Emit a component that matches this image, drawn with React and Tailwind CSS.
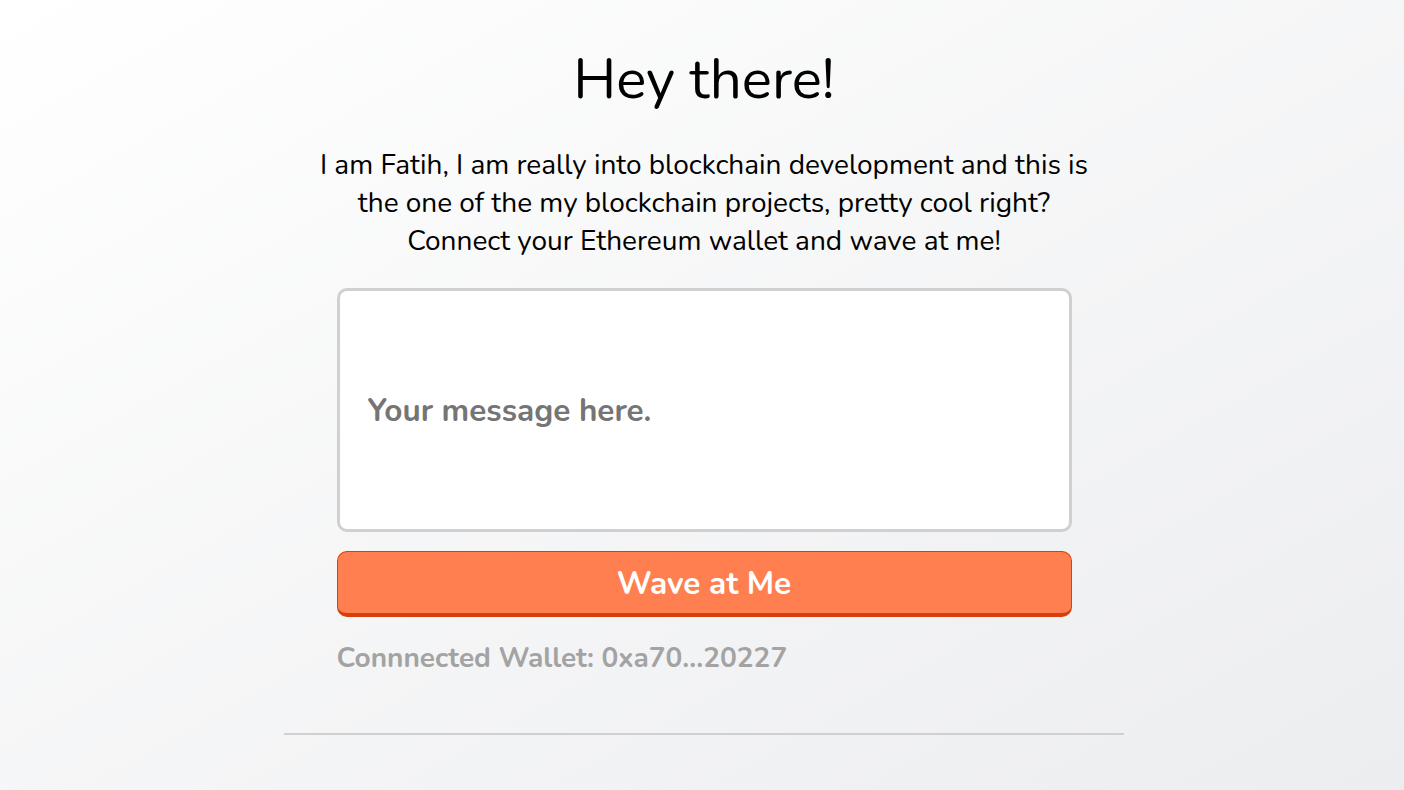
import React, { useState } from "react";

export default function App() {
  const [message, setMessage] = useState("");

  return (
    <div
      className="min-h-screen w-full bg-[linear-gradient(to_bottom_right,#ffffff,#ecedef)] pl-[4px] text-black"
      style={{ fontFamily: '"Nunito", "Lato", sans-serif' }}
    >
      <div className="mx-auto flex w-[840px] flex-col items-center pt-[44px]">
        {/* Header */}
        <h1 className="text-[56.5px] font-normal leading-[72px]">
          Hey there!
        </h1>

        <p className="mt-[30px] text-center text-[28px] leading-[38px]">
          I am Fatih, I am really into blockchain development and this is
          <br />
          the one of the my blockchain projects, pretty cool right?
          <br />
          Connect your Ethereum wallet and wave at me!
        </p>

        {/* Message box */}
        <div className="mt-[28px] flex w-[735px] flex-col">
          <input
            value={message}
            onChange={(e) => setMessage(e.target.value)}
            placeholder="Your message here."
            className="h-[244px] w-full rounded-[10px] border-[3px] border-[#d0d0d0] bg-white px-[28px] text-[31.5px] font-bold text-[#333] outline-none placeholder:text-[#757575]"
          />

          <button
            type="button"
            className="mt-[19px] h-[66px] w-full rounded-[10px] border border-b-[4px] border-[#d6400c] bg-[#ff7f50] pt-[3px] text-[31.5px] font-bold text-white"
          >
            Wave at Me
          </button>

          <div className="mt-[24px] text-[28px] font-bold leading-[34px] text-[#a3a3a3]">
            Connnected Wallet: 0xa70...20227
          </div>
        </div>

        <hr className="mt-[58px] h-[2px] w-full border-0 bg-[#cfd0d2]" />
      </div>
    </div>
  );
}
